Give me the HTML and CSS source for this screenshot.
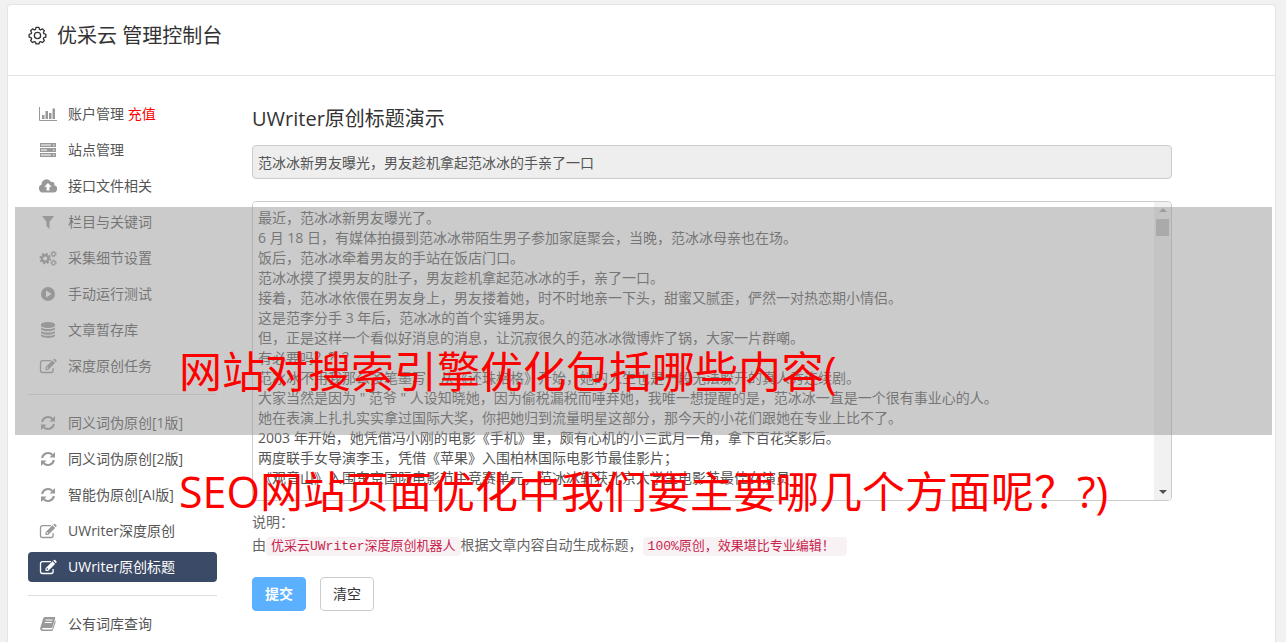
FILE: index.html
```html
<!DOCTYPE html>
<html lang="zh-CN">
<head>
<meta charset="utf-8">
<title>优采云 管理控制台</title>
<link rel="stylesheet" href="styles.css">
</head>
<body>
<svg class="defs" aria-hidden="true">
  <symbol id="i-chart" viewBox="0 0 18 16"><path d="M.5 1v13.500h17.500" fill="none" stroke="currentColor"/><path d="M3 9h2.500v4H3zM6.500 5H9v8H6.500zM10 7h2.500v6H10zM13.500 2.500H16V13h-2.500z"/></symbol>
  <symbol id="i-server" viewBox="0 0 18 16"><path d="M1 1h16v4H1zM1 6h16v4H1zM1 11h16v4H1zM2 2.500v1h10v-1zM2 7.500v1h6v-1zM2 12.500v1h10v-1zM14 2.500v1h1.500v-1zM14 7.500v1h1.500v-1zM14 12.500v1h1.500v-1z" fill-rule="evenodd"/></symbol>
  <symbol id="i-cloud" viewBox="0 0 18 16"><path fill-rule="evenodd" d="M4.300 14.500A4.200 4.200 0 0 1 2.600 6.400 5 5 0 0 1 12 3.900 2.600 2.600 0 0 1 15.300 7.200 3.700 3.700 0 0 1 14.300 14.500zM9 5L5.300 8.700h2.300V12.500h2.800V8.700h2.300z"/></symbol>
  <symbol id="i-filter" viewBox="0 0 18 16"><path d="M3 2h12.200l-4.700 5.700V15l-3-2.800V7.700z"/></symbol>
  <symbol id="i-gears" viewBox="0 0 18 16"><g fill="none" stroke="currentColor"><circle cx="6.200" cy="8.500" r="3.300" stroke-width="2.400"/><circle cx="6.200" cy="8.500" r="5" stroke-width="1.600" stroke-dasharray="2 1.927"/><circle cx="14.500" cy="4" r="1.800" stroke-width="1.200"/><circle cx="14.500" cy="4" r="2.700" stroke-width="1" stroke-dasharray="1.300 1.127"/><circle cx="14.500" cy="12.700" r="1.800" stroke-width="1.200"/><circle cx="14.500" cy="12.700" r="2.700" stroke-width="1" stroke-dasharray="1.300 1.127"/></g></symbol>
  <symbol id="i-play" viewBox="0 0 18 16"><path fill-rule="evenodd" d="M9 1a7 7 0 1 0 0 14A7 7 0 1 0 9 1zM7 4.500L12.500 8 7 11.500z"/></symbol>
  <symbol id="i-db" viewBox="0 0 18 16"><path d="M2 2.500C2 1 5 0 9 0s7 1 7 2.500v1C16 5 13 6 9 6S2 5 2 3.500zM2 5.500C5 7.500 13 7.500 16 5.500v1.300C16 8.300 13 9.300 9 9.300S2 8.300 2 6.800zM2 8.900c3 2 11 2 14 0v1.300c0 1.500-3 2.500-7 2.500s-7-1-7-2.500zM2 12.300c3 2 11 2 14 0v1.300C16 15.100 13 16 9 16s-7-.9-7-2.400z"/></symbol>
  <symbol id="i-edit" viewBox="0 0 18 16"><path d="M12 2.600H3.500a2 2 0 0 0-2 2v7.900a2 2 0 0 0 2 2h8.600a2 2 0 0 0 2-2V10" fill="none" stroke="currentColor" stroke-width="1.300"/><path fill-rule="evenodd" d="M13.500 2.300l2.600 2.600-7 7H6.500V9.300zM14.200 1.600l.7-.6q.6-.5 1.200 0l1.300 1.300q.6.600 0 1.200l-.7.700zM7.600 9.700v1.100h1.100l.6-.6-1.100-1.100z"/></symbol>
  <symbol id="i-sync" viewBox="0 0 18 16"><path d="M3.100 7A6 6 0 0 1 13.500 4M14.900 9A6 6 0 0 1 4.500 12" fill="none" stroke="currentColor" stroke-width="2"/><path d="M16 1v5.500h-5.500zM2 15V9.500h5.500z"/></symbol>
  <symbol id="i-book" viewBox="0 0 18 16"><path fill-rule="evenodd" d="M6 1h9.500q1 0 .7 1.200L13.500 11q-.3 1-1.300 1H4q-1 0-1 .8t1 .8h9.200L16 4.500q1 .4.600 1.700L14 14q-.3 1-1.500 1H3.500Q1 15 1.200 12L4 3Q4.500 1 6 1zM6.700 3.500l-.3 1h7l.3-1zM6 6l-.3 1h7L13 6z"/></symbol>
  <symbol id="i-cog" viewBox="0 0 20 20"><g fill="none" stroke="currentColor" stroke-width="1.400" stroke-linejoin="round"><path d="M8.500 1.500h3l.6 2 1.200.500 1.900-1 2 2-1 1.900.5 1.200 2.100.6v3l-2.100.6-.5 1.200 1 1.900-2 2-1.900-1-1.200.5-.6 2h-3l-.6-2-1.200-.5-1.900 1-2-2 1-1.900-.5-1.200-2.100-.6v-3l2.100-.6.5-1.200-1-1.900 2-2 1.900 1 1.200-.5z"/><circle cx="10" cy="10" r="3.300"/></g></symbol>
</svg>

<div class="panel">
  <header class="panel-head">
    <svg class="cog"><use href="#i-cog"/></svg>
    <h1>优采云 管理控制台</h1>
  </header>
  <div class="panel-body">
    <nav class="side">
      <a href="#"><svg><use href="#i-chart"/></svg><span>账户管理 <em>充值</em></span></a>
      <a href="#"><svg><use href="#i-server"/></svg>站点管理</a>
      <a href="#"><svg><use href="#i-cloud"/></svg>接口文件相关</a>
      <a href="#"><svg><use href="#i-filter"/></svg>栏目与关键词</a>
      <a href="#"><svg><use href="#i-gears"/></svg>采集细节设置</a>
      <a href="#"><svg><use href="#i-play"/></svg>手动运行测试</a>
      <a href="#"><svg><use href="#i-db"/></svg>文章暂存库</a>
      <a href="#"><svg><use href="#i-edit"/></svg>深度原创任务</a>
      <hr>
      <a href="#"><svg><use href="#i-sync"/></svg>同义词伪原创[1版]</a>
      <a href="#"><svg><use href="#i-sync"/></svg>同义词伪原创[2版]</a>
      <a href="#"><svg><use href="#i-sync"/></svg>智能伪原创[AI版]</a>
      <a href="#"><svg><use href="#i-edit"/></svg>UWriter深度原创</a>
      <a href="#" class="active"><svg><use href="#i-edit"/></svg>UWriter原创标题</a>
      <hr>
      <a href="#"><svg><use href="#i-book"/></svg>公有词库查询</a>
    </nav>
    <main class="main">
      <h2>UWriter原创标题演示</h2>
      <form>
        <input class="title-input" type="text" aria-label="标题" readonly value="范冰冰新男友曝光，男友趁机拿起范冰冰的手亲了一口">
        <div class="editor">
          <textarea aria-label="文章内容">最近，范冰冰新男友曝光了。
6 月 18 日，有媒体拍摄到范冰冰带陌生男子参加家庭聚会，当晚，范冰冰母亲也在场。
饭后，范冰冰牵着男友的手站在饭店门口。
范冰冰摸了摸男友的肚子，男友趁机拿起范冰冰的手，亲了一口。
接着，范冰冰依偎在男友身上，男友搂着她，时不时地亲一下头，甜蜜又腻歪，俨然一对热恋期小情侣。
这是范李分手 3 年后，范冰冰的首个实锤男友。
但，正是这样一个看似好消息的消息，让沉寂很久的范冰冰微博炸了锅，大家一片群嘲。
有必要吗？？？
范冰冰不用我那么多笔墨写，从《还珠格格》开始，她的人生也是一段无法躲开的真人秀连续剧。
大家当然是因为 " 范爷 " 人设知晓她，因为偷税漏税而唾弃她，我唯一想提醒的是，范冰冰一直是一个很有事业心的人。
她在表演上扎扎实实拿过国际大奖，你把她归到流量明星这部分，那今天的小花们跟她在专业上比不了。
2003 年开始，她凭借冯小刚的电影《手机》里，颇有心机的小三武月一角，拿下百花奖影后。
两度联手女导演李玉，凭借《苹果》入围柏林国际电影节最佳影片；
《观音山》入围东京国际电影节主竞赛单元，范冰冰斩获北京大学生电影节最佳女演员</textarea>
          <div class="bar" aria-hidden="true">
            <i class="up"></i><i class="thumb"></i><i class="down"></i>
          </div>
        </div>
        <div class="note">
          <p>说明：</p>
          <p>由<code>优采云UWriter深度原创机器人</code>根据文章内容自动生成标题，<code class="wide">100%原创，效果堪比专业编辑！</code></p>
        </div>
        <div class="actions">
          <button type="button" class="primary">提交</button>
          <button type="button">清空</button>
        </div>
      </form>
    </main>
  </div>
</div>
<div class="shade"></div>
<div class="caption"><p>网站对搜索引擎优化包括哪些内容(</p><p>SEO网站页面优化中我们要主要哪几个方面呢？?)</p></div>
</body>
</html>
```
FILE: styles.css
```css
* { box-sizing: border-box; }
body {
  margin: 0;
  min-height: 100vh;
  padding: 4px 10px 0 7px;
  display: flex;
  position: relative;
  overflow: hidden;
  background: #f1f1f1;
  color: #555;
  font: 14px/20px "Open Sans", "Noto Sans CJK SC", sans-serif;
}
.defs { position: absolute; width: 0; height: 0; }
h1, h2, p { margin: 0; font-weight: 400; }
svg { fill: currentColor; }
.panel {
  flex: 1;
  min-width: 0;
  background: #fff;
  border: 1px solid #e4e4e4;
  border-bottom: 0;
  border-radius: 4px 4px 0 0;
}
.panel-head {
  display: flex;
  align-items: center;
  gap: 10px;
  padding: 16px 20px 24px;
  border-bottom: 1px solid #e4e4e4;
  color: #333;
}
.cog { width: 19px; height: 19px; margin-bottom: 2px; }
h1 { font-size: 20px; line-height: 30px; }
.panel-body { display: flex; gap: 35px; padding: 23px 103px 0 20px; }
.side { flex: 0 0 189px; display: flex; flex-direction: column; gap: 6px; }
.side a {
  display: flex;
  align-items: center;
  gap: 11px;
  height: 30px;
  padding: 0 11px;
  border-radius: 4px;
  color: #555;
  text-decoration: none;
  white-space: nowrap;
}
.side svg { width: 18px; height: 16px; color: #999; }
.side em { color: #f00; font-style: normal; }
.side .active { background: #3b4a66; color: #fff; }
.side .active svg { color: #fff; }
.side hr { width: 100%; margin: 7px 0; border: 0; border-top: 1px solid #ddd; }
.main { flex: 1; min-width: 0; padding-top: 5px; }
h2 { font-size: 20px; line-height: 30px; color: #333; margin-bottom: 11px; }
.title-input {
  display: block;
  width: 100%;
  height: 34px;
  padding: 0 5px;
  border: 1px solid #ccc;
  border-radius: 4px;
  background: #eee;
  color: #555;
  font: inherit;
}
.editor {
  display: flex;
  height: 300px;
  margin-top: 22px;
  border: 1px solid #ccc;
  border-radius: 4px;
  overflow: hidden;
}
.editor textarea {
  flex: 1;
  padding: 6px 5px;
  border: 0;
  outline: 0;
  resize: none;
  overflow: hidden;
  background: #fff;
  color: #555;
  font: inherit;
}
.bar {
  width: 17px;
  padding: 6px 2px;
  display: flex;
  flex-direction: column;
  align-items: center;
  background: #f1f1f1;
}
.up, .down { border: 4px solid transparent; }
.up { border-top: 0; border-bottom-color: #a3a3a3; }
.thumb { width: 13px; height: 17px; margin-top: 7px; background: #bcbcbc; }
.down { border-bottom: 0; border-top-color: #505050; margin-top: auto; }
.note { padding-top: 9px; line-height: 23px; color: #666; }
code {
  padding: 2px 5px;
  border-radius: 4px;
  background: #f9f2f4;
  color: #c7254e;
  font: 13px/15px "Liberation Mono", "Noto Sans CJK SC", monospace;
}
.wide { padding-right: 12px; }
.actions { display: flex; gap: 14px; padding-top: 21px; }
button {
  width: 54px;
  height: 34px;
  padding: 0;
  border: 1px solid #ccc;
  border-radius: 4px;
  background: #fff;
  color: #333;
  font: inherit;
}
.primary { border-color: #5bb0ff; background: #5bb0ff; color: #fff; font-weight: 700; }
.shade {
  position: absolute;
  top: 207px;
  left: 15px;
  right: 14px;
  height: 228px;
  background: rgba(151, 151, 151, .5);
}
.caption {
  position: absolute;
  top: 312px;
  left: 179px;
  color: #f00;
  font-size: 43px;
  line-height: 120px;
  white-space: nowrap;
}
```
